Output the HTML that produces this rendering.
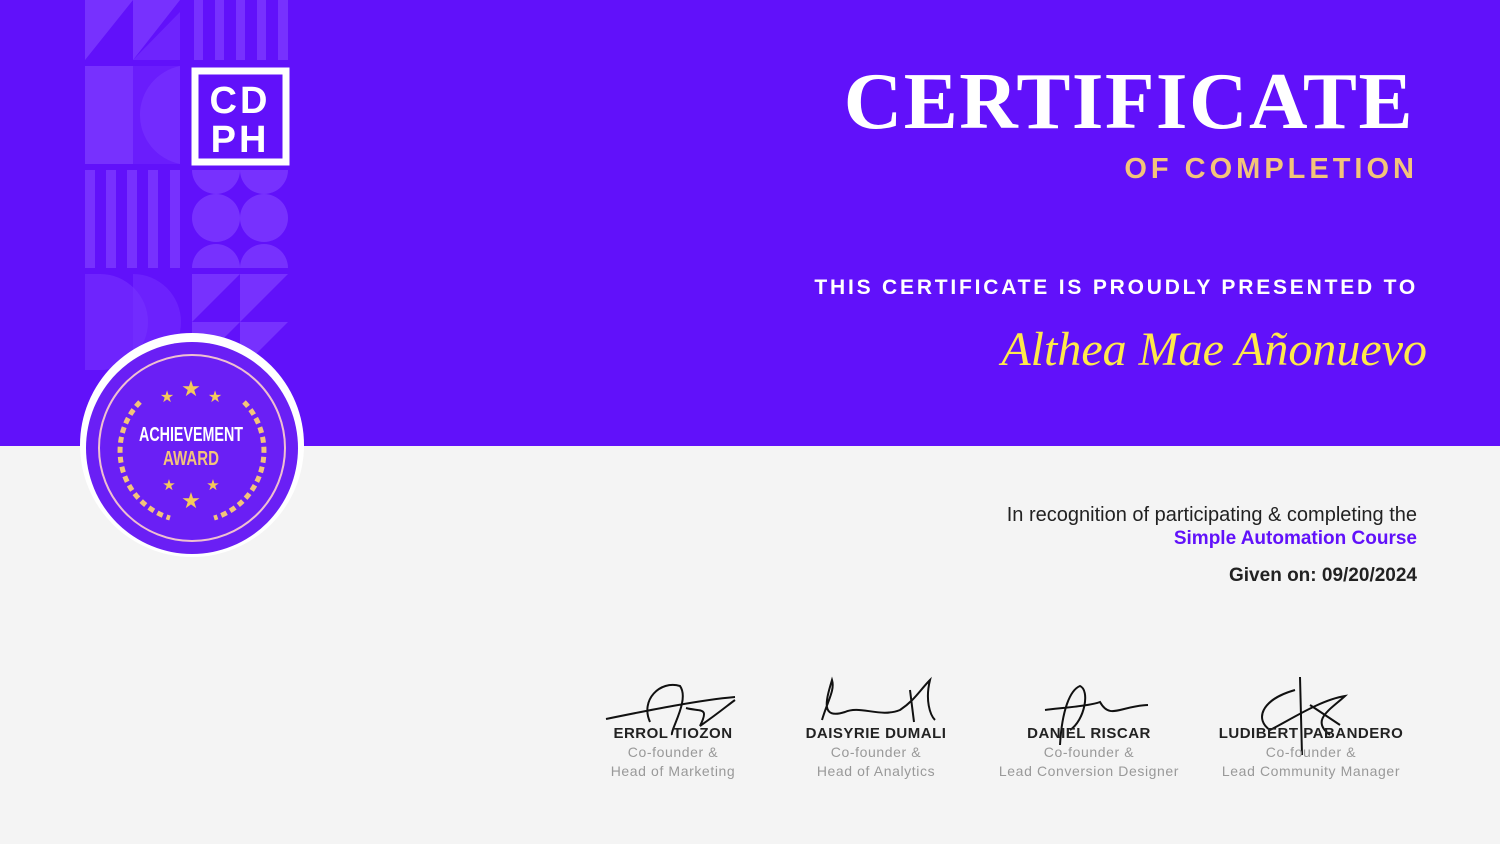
<!DOCTYPE html><html><head><style>
body{margin:0;width:1500px;height:844px;overflow:hidden;background:#f4f4f4;font-family:"Liberation Sans",sans-serif;position:relative}
.top{position:absolute;left:0;top:0;width:1500px;height:446px;background:#6111fa}
.a{position:absolute}
.r{text-align:right}
.sig{position:absolute;top:725px;text-align:center;width:240px}
.sig b{display:block;font-size:15px;color:#222;letter-spacing:.5px}
.sig span{display:block;font-size:14px;color:#999;letter-spacing:.6px;line-height:17px;margin-top:2px}
</style></head><body>
<div class="top"></div>
<svg class="a" style="left:0;top:0" width="320" height="560">
<g fill="#7a35ff" opacity=".9">
<polygon points="85,0 133,0 85,60"/><polygon points="133,0 180,0 133,60"/>
<polygon points="180,12 133,60 180,60" opacity=".6"/>
<rect x="194" y="0" width="9" height="60"/><rect x="215" y="0" width="9" height="60"/><rect x="236" y="0" width="9" height="60"/><rect x="257" y="0" width="9" height="60"/><rect x="278" y="0" width="10" height="60"/>
<rect x="85" y="66" width="48" height="98"/><path d="M180,66 A50,50 0 0 0 180,164 Z" opacity=".7"/><path d="M133,66 L180,66 L180,164 L133,164 Z" opacity=".4"/>
<rect x="85" y="170" width="10" height="98"/><rect x="106" y="170" width="10" height="98"/><rect x="127" y="170" width="10" height="98"/><rect x="148" y="170" width="10" height="98"/><rect x="170" y="170" width="10" height="98"/>
<circle cx="216" cy="218" r="24"/><circle cx="264" cy="218" r="24"/><path d="M192,170 a24,24 0 0 0 48,0Z"/><path d="M240,170 a24,24 0 0 0 48,0Z"/><path d="M192,268 a24,24 0 0 1 48,0Z"/><path d="M240,268 a24,24 0 0 1 48,0Z"/>
<path d="M85,274 L100,274 A48,48 0 0 1 100,370 L85,370Z" opacity=".6"/><path d="M133,274 A48,48 0 0 1 133,370Z" opacity=".5"/>
<polygon points="192,274 240,274 192,322"/><polygon points="240,274 288,274 240,322"/><polygon points="192,322 240,322 192,370"/><polygon points="240,322 288,322 240,370"/>
</g>
<rect x="195" y="71" width="91" height="91" fill="none" stroke="#fff" stroke-width="7"/>
<text x="240" y="113" font-family="Liberation Sans" font-weight="bold" font-size="38" fill="#fff" text-anchor="middle" letter-spacing="3">CD</text>
<text x="240" y="152" font-family="Liberation Sans" font-weight="bold" font-size="38" fill="#fff" text-anchor="middle" letter-spacing="3">PH</text>
<circle cx="192" cy="445" r="112" fill="#fff"/>
<circle cx="192" cy="448" r="106" fill="#6a1ff5"/>
<circle cx="192" cy="448" r="93" fill="none" stroke="#f0c0d0" stroke-width="2"/>
<g fill="#f5c95a" font-size="22" text-anchor="middle" font-family="DejaVu Sans">
<text x="191" y="396">★</text><text x="167" y="402" font-size="16">★</text><text x="215" y="402" font-size="16">★</text>
<text x="191" y="508">★</text><text x="169" y="490" font-size="15">★</text><text x="213" y="490" font-size="15">★</text></g>
<g fill="none" stroke="#f3c47a" stroke-width="5" stroke-dasharray="6 4">
<path d="M140,402 A70,70 0 0 0 170,518"/><path d="M244,402 A70,70 0 0 1 214,518"/></g>
<text x="191" y="441" font-family="Liberation Sans" font-weight="bold" font-size="20" fill="#fff" text-anchor="middle" textLength="104" lengthAdjust="spacingAndGlyphs">ACHIEVEMENT</text>
<text x="191" y="465" font-family="Liberation Sans" font-weight="bold" font-size="20" fill="#f3c47a" text-anchor="middle" textLength="56" lengthAdjust="spacingAndGlyphs">AWARD</text>
</svg>
<div class="a r" style="right:86px;top:55px;font-family:'Liberation Serif',serif;font-weight:bold;font-size:81px;color:#fff;letter-spacing:1.5px">CERTIFICATE</div>
<div class="a r" style="right:82px;top:153px;font-size:29px;font-weight:bold;color:#f3c47a;letter-spacing:4px">OF COMPLETION</div>
<div class="a r" style="right:82px;top:276px;font-size:21px;font-weight:bold;color:#fff;letter-spacing:2.8px">THIS CERTIFICATE IS PROUDLY PRESENTED TO</div>
<div class="a r" style="right:73px;top:322px;font-family:'Liberation Serif',serif;font-style:italic;font-size:48px;color:#ffe94a">Althea Mae Añonuevo</div>
<div class="a r" style="right:83px;top:504px;font-size:20px;color:#222">In recognition of participating &amp; completing the</div>
<div class="a r" style="right:83px;top:528px;font-size:19px;font-weight:bold;color:#6111fa">Simple Automation Course</div>
<div class="a r" style="right:83px;top:565px;font-size:19px;font-weight:bold;color:#222">Given on: 09/20/2024</div>
<svg class="a" style="left:0;top:0" width="1500" height="844" fill="none" stroke="#111" stroke-width="2">
<path d="M606,719 C650,710 700,700 735,697 M650,722 C640,700 660,680 680,686 C690,700 670,730 672,735 M686,708 C700,712 710,706 700,726 C720,712 728,705 735,700"/>
<path d="M822,720 C828,700 835,690 832,680 C826,700 820,720 845,712 C860,705 880,718 900,710 C915,700 920,690 930,680 C925,700 930,715 935,720 M910,690 L914,722"/>
<path d="M1045,710 C1060,708 1090,706 1100,702 C1110,720 1120,706 1148,705 M1060,745 C1062,710 1070,690 1080,686 C1090,690 1085,720 1070,730"/>
<path d="M1300,677 L1302,755 M1295,690 C1260,700 1255,720 1270,730 C1290,720 1320,700 1345,696 C1330,710 1310,720 1330,735 M1310,705 L1340,725"/>
</svg>
<div class="sig" style="left:553px"><b>ERROL TIOZON</b><span>Co-founder &amp;</span><span>Head of Marketing</span></div>
<div class="sig" style="left:756px"><b>DAISYRIE DUMALI</b><span>Co-founder &amp;</span><span>Head of Analytics</span></div>
<div class="sig" style="left:969px"><b>DANIEL RISCAR</b><span>Co-founder &amp;</span><span>Lead Conversion Designer</span></div>
<div class="sig" style="left:1191px"><b>LUDIBERT PABANDERO</b><span>Co-founder &amp;</span><span>Lead Community Manager</span></div>
</body></html>
